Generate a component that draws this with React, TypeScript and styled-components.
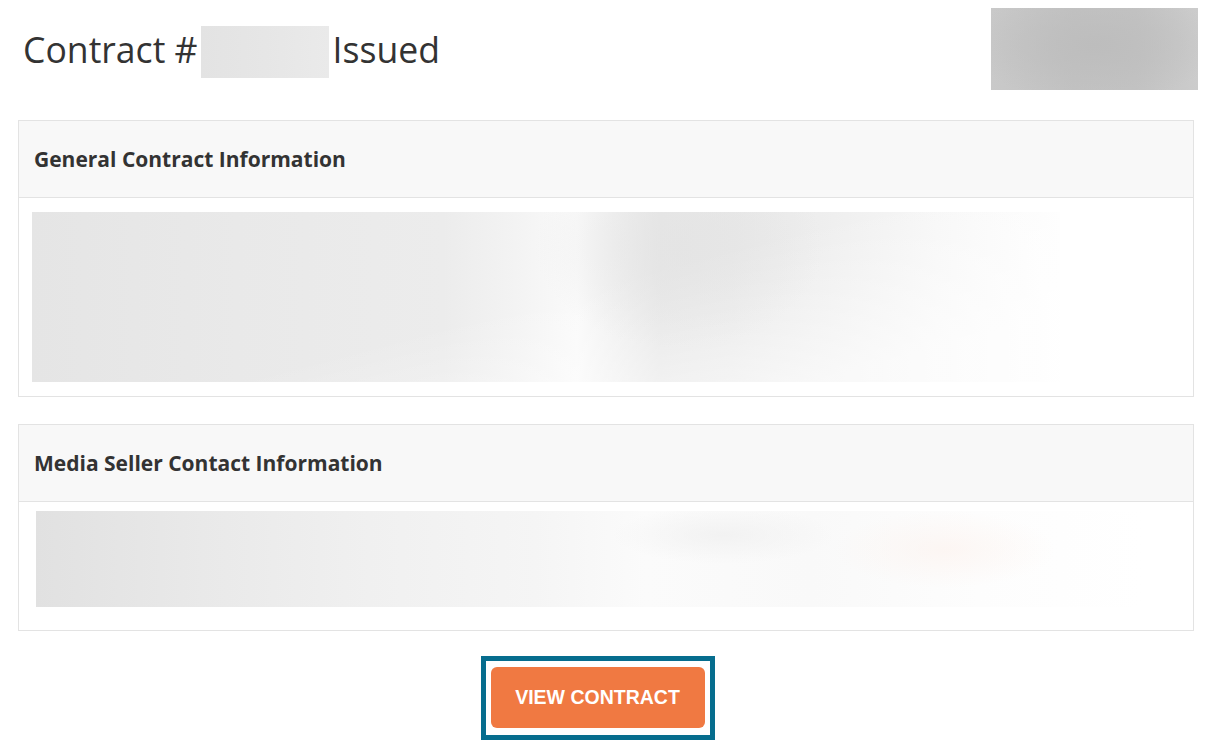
import styled, { createGlobalStyle } from "styled-components";

const GlobalStyle = createGlobalStyle`
    html, body {
        margin: 0;
        padding: 0;
        background: #ffffff;
    }
    body {
        font-family: "Open Sans", "Liberation Sans", sans-serif;
        color: #333333;
    }
`

const Page = styled.div`
    width: 1209px;
    height: 755px;
    box-sizing: border-box;
    padding: 8px 15px 0 18px;
    display: flex;
    flex-direction: column;
`

const HeaderRow = styled.header`
    display: flex;
    justify-content: space-between;
    align-items: flex-start;
    margin-right: -4px;
    margin-bottom: 30px;
`

const Title = styled.h1`
    margin: 18px 0 0 5px;
    display: flex;
    align-items: flex-start;
    font-size: 35.6px;
    font-weight: 400;
    line-height: 47px;
    color: #333333;
`

const Redacted = styled.span`
    display: inline-block;
    width: 128px;
    height: 52px;
    margin: 0 4px 0 3px;
    background: linear-gradient(90deg, #e3e3e3 0%, #e6e6e6 50%, #eaeaea 100%);
`

const Logo = styled.div`
    width: 207px;
    height: 82px;
    background:
        radial-gradient(ellipse 60% 70% at 50% 45%, #bdbdbd 0%, rgba(189, 189, 189, 0) 100%),
        linear-gradient(90deg, #c9c9c9 0%, #c2c2c2 40%, #c3c3c3 70%, #cccccc 100%);
`

type PanelProps = {
    spacing: string;
};

const Panel = styled.section<{ gap?: number }>`
    border: 1px solid #e3e3e3;
    margin-bottom: ${(props) => props.gap ?? 0}px;
    background: #ffffff;
`

const PanelHeader = styled.div`
    height: 76px;
    display: flex;
    align-items: center;
    padding: 0 15px;
    background: #f8f8f8;
    border-bottom: 1px solid #e3e3e3;
    font-size: 21px;
    font-weight: 700;
    color: #333333;
`

const PanelBody = styled.div<PanelProps>`
    padding: ${(props) => props.spacing};
`

const BlurBlock = styled.div<{ w: number; h: number; variant: "general" | "seller" }>`
    width: ${(props) => props.w}px;
    height: ${(props) => props.h}px;
    background: ${(props) =>
        props.variant === "general"
            ? `radial-gradient(ellipse 14% 60% at 63% 20%, rgba(228, 228, 228, 0.7) 0%, rgba(228, 228, 228, 0) 100%),
               linear-gradient(165deg, rgba(255, 255, 255, 0) 50%, rgba(255, 255, 255, 0.6) 85%),
               linear-gradient(90deg, #e5e5e5 0%, #e9e9e9 20%, #ececec 40%, #f3f3f3 47%, #fafafa 53%, #f0f0f0 57%, #e6e6e6 61%, #e8e8e8 68%, #efefef 78%, #f7f7f7 88%, #fefefe 100%)`
            : `radial-gradient(ellipse 10% 40% at 82% 40%, rgba(252, 243, 239, 0.7) 0%, rgba(252, 243, 239, 0) 100%),
               radial-gradient(ellipse 10% 30% at 62% 25%, rgba(240, 240, 240, 0.8) 0%, rgba(240, 240, 240, 0) 100%),
               linear-gradient(90deg, #e1e1e1 0%, #e9e9e9 15%, #f0f0f0 30%, #f5f5f5 45%, #fbfbfb 55%, #f9f9f9 70%, #fdfdfd 85%, #ffffff 100%)`};
`

const ActionRow = styled.div`
    display: flex;
    justify-content: center;
    padding-right: 17px;
`

const FocusRing = styled.div`
    border: 5px solid #066d8e;
    padding: 6px 5px 7px;
    background: #ffffff;
`

const ViewButton = styled.button`
    width: 214px;
    height: 61px;
    border: none;
    border-radius: 6px;
    background: #f07942;
    color: #ffffff;
    font-family: "Liberation Sans", Arial, sans-serif;
    font-size: 19.5px;
    font-weight: 700;
    cursor: pointer;
    display: block;
    padding: 0;
`

export default function App() {
    return (
        <>
            <GlobalStyle />
            <Page>
                <HeaderRow>
                    <Title>
                        Contract #<Redacted />Issued
                    </Title>
                    <Logo />
                </HeaderRow>
                <Panel gap={27}>
                    <PanelHeader>General Contract Information</PanelHeader>
                    <PanelBody spacing="14px 13px 14px 13px">
                        <BlurBlock w={1028} h={170} variant="general" />
                    </PanelBody>
                </Panel>
                <Panel gap={25}>
                    <PanelHeader>Media Seller Contact Information</PanelHeader>
                    <PanelBody spacing="9px 17px 23px 17px">
                        <BlurBlock w={1108} h={96} variant="seller" />
                    </PanelBody>
                </Panel>
                <ActionRow>
                    <FocusRing>
                        <ViewButton>VIEW CONTRACT</ViewButton>
                    </FocusRing>
                </ActionRow>
            </Page>
        </>
    )
}
